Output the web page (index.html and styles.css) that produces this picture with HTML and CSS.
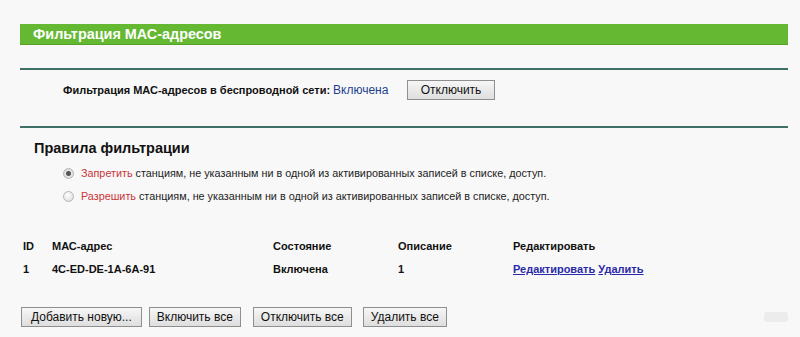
FILE: index.html
```html
<!DOCTYPE html>
<html lang="ru">
<head>
    <meta charset="UTF-8">
    <meta name="viewport" content="width=device-width, initial-scale=1.0">
    <title>Фильтрация МАС-адресов</title>

    <link rel="stylesheet" href="styles.css">
</head>
<body>
    <div class="page">
        <h1 class="title-bar">Фильтрация МАС-адресов</h1>

        <hr class="divider first">

        <section class="status-row">
            <span class="status-label">Фильтрация МАС-адресов в беспроводной сети:</span>
            <span class="status-value">Включена</span>
            <button type="button" class="btn status-btn">Отключить</button>
        </section>

        <hr class="divider second">

        <h2 class="rules-title">Правила фильтрации</h2>

        <div class="rules">
            <label class="rule">
                <span class="radio checked"></span>
                <span><span class="rule-key">Запретить</span> станциям, не указанным ни в одной из активированных записей в списке, доступ.</span>
            </label>
            <label class="rule">
                <span class="radio"></span>
                <span><span class="rule-key">Разрешить</span> станциям, не указанным ни в одной из активированных записей в списке, доступ.</span>
            </label>
        </div>

        <table class="mac-table">
            <tr>
                <th class="col-id">ID</th>
                <th class="col-mac">МАС-адрес</th>
                <th class="col-state">Состояние</th>
                <th class="col-desc">Описание</th>
                <th>Редактировать</th>
            </tr>
            <tr>
                <td>1</td>
                <td>4C-ED-DE-1A-6A-91</td>
                <td>Включена</td>
                <td>1</td>
                <td><a href="#">Редактировать</a> <a href="#">Удалить</a></td>
            </tr>
        </table>

        <div class="actions">
            <button type="button" class="btn wide">Добавить новую...</button>
            <button type="button" class="btn">Включить все</button>
            <button type="button" class="btn">Отключить все</button>
            <button type="button" class="btn">Удалить все</button>
            <span class="watermark"></span>
        </div>
    </div>
</body>
</html>
```

FILE: styles.css
```css
body {
    margin: 0;
    background-color: #f8f8f8;
    font-family: "Liberation Sans", Arial, sans-serif;
    color: #111;
}

.page {
    width: 768px;
    padding: 24px 0 0 20px;
}

.title-bar {
    margin: 0;
    height: 21px;
    line-height: 20px;
    padding-left: 13px;

    background-color: #64b832;
    border-bottom: 1px solid #55a02a;
    box-sizing: border-box;

    color: #fff;
    font-size: 14.4px;
    font-weight: bold;
}

.divider {
    margin: 0;
    border: none;
    height: 2px;
    background-color: #3f6f66;
}

.divider.first {
    margin-top: 23px;
}

.status-row {
    display: flex;
    align-items: center;
    height: 20px;
    margin: 10px 0 26px 43px;
    font-size: 11px;
}

.status-label {
    font-weight: bold;
    width: 270px;
}

.status-value {
    color: #1f3f8f;
    font-size: 12px;
    width: 74px;
}

.btn {
    height: 20px;
    padding: 0 7px;

    background: linear-gradient(#f6f6f6, #dedede);
    border: 1px solid #8f8f8f;
    border-radius: 0;

    font-family: "Liberation Sans", Arial, sans-serif;
    font-size: 12px;
    color: #111;
}

.btn.wide {
    padding: 0 9px;
}

.status-btn {
    width: 88px;
}

.rules-title {
    margin: 10px 0 0 14px;
    font-size: 14.5px;
    font-weight: bold;
    line-height: 20px;
}

.rules {
    margin: 7px 0 0 43px;
    display: flex;
    flex-direction: column;
    gap: 7px;
}

.rule {
    display: flex;
    align-items: center;
    gap: 7px;
    font-size: 10.8px;
    line-height: 16px;
    color: #222;
}

.rule-key {
    color: #c8343a;
}

.radio {
    width: 9px;
    height: 9px;
    border-radius: 50%;
    border: 1px solid #b5b5b5;
    background: radial-gradient(circle at 40% 35%, #fff, #d8d8d8);
}

.radio.checked {
    background: radial-gradient(circle, #555 0, #555 2px, #e6e6e6 3px, #d0d0d0);
}

.mac-table {
    margin: 30px 0 0 0;
    border-collapse: collapse;
    font-size: 11px;
    font-weight: bold;
}

.mac-table th,
.mac-table td {
    text-align: left;
    padding: 0 0 0 3px;
    height: 24px;
    font-weight: bold;
}

.mac-table td {
    height: 22px;
}

.col-id {
    width: 26px;
}

.col-mac {
    width: 218px;
}

.col-state {
    width: 122px;
}

.col-desc {
    width: 112px;
}

.mac-table a {
    color: #2a2aa8;
}

.actions {
    display: flex;
    align-items: center;
    gap: 7px;
    margin: 27px 0 0 1px;
}

.actions .btn:nth-child(2) {
    margin-right: 5px;
}

.actions .btn:nth-child(3) {
    margin-right: 4px;
}

.watermark {
    margin-left: auto;
    width: 24px;
    height: 10px;
    border-radius: 3px;
    background-color: #ececec;
}
```
